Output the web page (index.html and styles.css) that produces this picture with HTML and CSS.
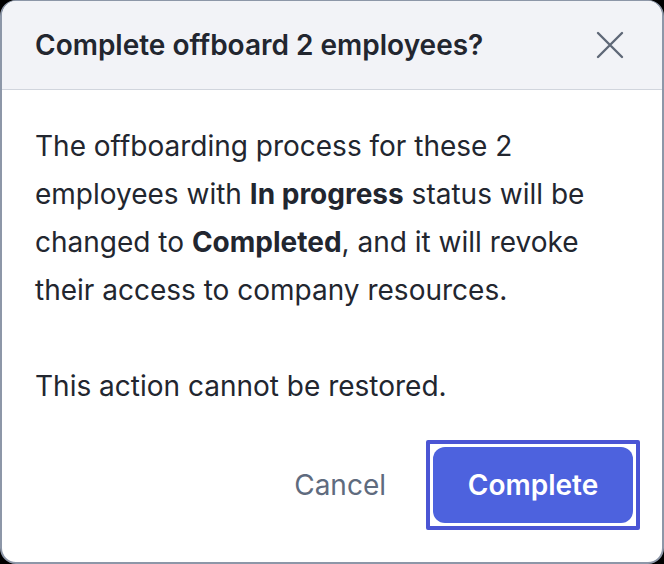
FILE: index.html
```html
<!DOCTYPE html>
<html lang="en">
<head>
<meta charset="utf-8">
<title>Complete offboard</title>
<link rel="stylesheet" href="styles.css">
</head>
<body>
<div class="dialog" role="dialog" aria-labelledby="dlg-title">
  <header class="dialog-header">
    <h2 id="dlg-title" class="dialog-title">Complete offboard 2 employees?</h2>
    <button class="close-btn" aria-label="Close">
      <svg width="28" height="28" viewBox="0 0 28 28" fill="none" stroke="#5f6877" stroke-width="2.4" stroke-linecap="round">
        <path d="M2 2 L26 26 M26 2 L2 26"/>
      </svg>
    </button>
  </header>
  <div class="dialog-body">
    <p>The offboarding process for these 2 employees with <strong>In progress</strong> status will be changed to <strong>Completed</strong>, and it will revoke their access to company resources.</p>
    <p>This action cannot be restored.</p>
  </div>
  <footer class="dialog-footer">
    <button class="btn-cancel">Cancel</button>
    <span class="focus-ring"><button class="btn-primary">Complete</button></span>
  </footer>
</div>
</body>
</html>
```
FILE: styles.css
```css
* { box-sizing: border-box; }
html, body { margin: 0; padding: 0; }
body {
  width: 664px;
  height: 564px;
  background: #000;
  font-family: Inter, "Noto Sans", sans-serif;
  color: #22262f;
}
.dialog {
  width: 664px;
  height: 564px;
  border: 2px solid #8d97a8;
  border-top-width: 1px;
  border-radius: 16px;
  background: #fff;
  overflow: hidden;
  display: flex;
  flex-direction: column;
}
.dialog-header {
  height: 89px;
  background: #f2f3f7;
  border-bottom: 1px solid #d1d5dd;
  display: flex;
  align-items: center;
  justify-content: space-between;
  padding: 0 38px 0 33px;
}
.dialog-title {
  margin: 0;
  font-size: 28px;
  font-weight: 600;
  color: #22262f;
}
.close-btn {
  border: 0;
  background: none;
  padding: 0;
  display: flex;
}
.dialog-body {
  padding: 32px 33px 0;
  font-size: 28px;
  line-height: 48px;
}
.dialog-body p { margin: 0; }
.dialog-body p + p { margin-top: 48px; }
.dialog-body strong { font-weight: 700; }
.dialog-footer {
  margin-top: 30px;
  display: flex;
  justify-content: flex-end;
  align-items: center;
  padding-right: 22px;
}
.btn-cancel {
  border: 0;
  background: none;
  font-family: inherit;
  font-size: 28px;
  color: #5f6b7e;
  padding: 0;
  margin-right: 40px;
}
.focus-ring {
  display: flex;
  border: 4px solid #4b55d4;
  border-radius: 2px;
  padding: 3px;
}
.btn-primary {
  width: 200px;
  height: 76px;
  border: 0;
  border-radius: 12px;
  background: #4d62de;
  color: #fff;
  font-family: inherit;
  font-size: 28px;
  font-weight: 600;
}
```
